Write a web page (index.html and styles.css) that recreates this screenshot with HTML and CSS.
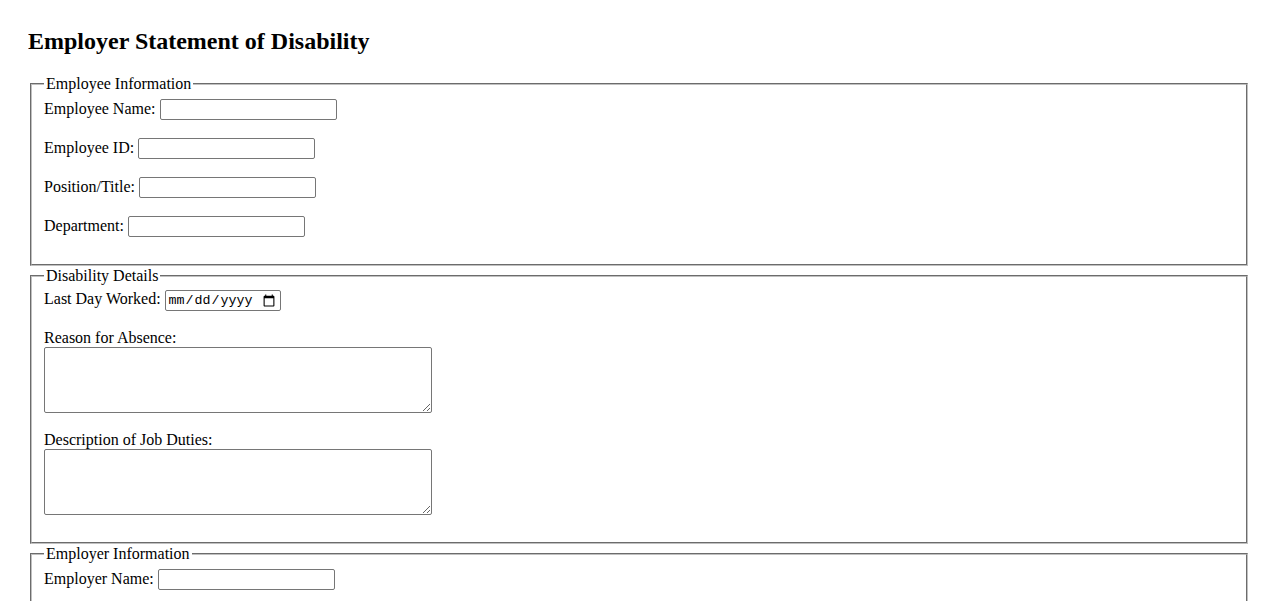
FILE: index.html
```html
<!DOCTYPE html>
<html>
<head>
<meta charset="utf-8">
<title>Employer Statement of Disability</title>
<link rel="stylesheet" href="styles.css">
</head>
<body>
<h2 class="title">Employer Statement of Disability</h2>
<form class="form">
  <fieldset class="section">
    <legend>Employee Information</legend>
    <div class="row"><label for="en">Employee Name:</label> <input class="text" type="text" id="en"></div>
    <div class="row"><label for="eid">Employee ID:</label> <input class="text" type="text" id="eid"></div>
    <div class="row"><label for="pos">Position/Title:</label> <input class="text" type="text" id="pos"></div>
    <div class="row"><label for="dep">Department:</label> <input class="text" type="text" id="dep"></div>
  </fieldset>
  <fieldset class="section">
    <legend>Disability Details</legend>
    <div class="row"><label for="ldw">Last Day Worked:</label> <input class="date" type="date" id="ldw"></div>
    <div class="row"><label for="rfa">Reason for Absence:</label><br><textarea class="area" id="rfa"></textarea></div>
    <div class="row"><label for="djd">Description of Job Duties:</label><br><textarea class="area" id="djd"></textarea></div>
  </fieldset>
  <fieldset class="section">
    <legend>Employer Information</legend>
    <div class="row"><label for="ern">Employer Name:</label> <input class="text" type="text" id="ern"></div>
  </fieldset>
</form>
</body>
</html>
```
FILE: styles.css
```css
body {
  margin: 28px;
  font-family: "Liberation Serif", "Times New Roman", serif;
  font-size: 16px;
  color: #000;
  background: #fff;
}
.title {
  font-size: 24px;
  font-weight: bold;
  margin: 0 0 19.92px;
}
.section {
  margin: 0 2px 1px;
  padding: 5.6px 12px 9px;
  border: 2px groove #c0c0c0;
}
.section legend {
  padding: 0 2px;
}
.row {
  margin-bottom: 18px;
}
.text {
  font-family: Arial, "Liberation Sans", sans-serif;
  font-size: 13.33px;
  width: 177px;
  height: 21px;
  box-sizing: border-box;
  padding: 1px 2px;
  border: 1px solid #767676;
  border-radius: 2px;
}
.date {
  font-family: "Liberation Mono", monospace;
  font-size: 13.33px;
  width: 116px;
  height: 21px;
  box-sizing: border-box;
  padding: 1px 2px;
  border: 1px solid #767676;
  border-radius: 2px;
}
.area {
  font-family: "Liberation Mono", monospace;
  font-size: 13.33px;
  width: 388px;
  height: 66px;
  box-sizing: border-box;
  padding: 2px;
  border: 1px solid #767676;
  border-radius: 2px;
  vertical-align: bottom;
}
```
